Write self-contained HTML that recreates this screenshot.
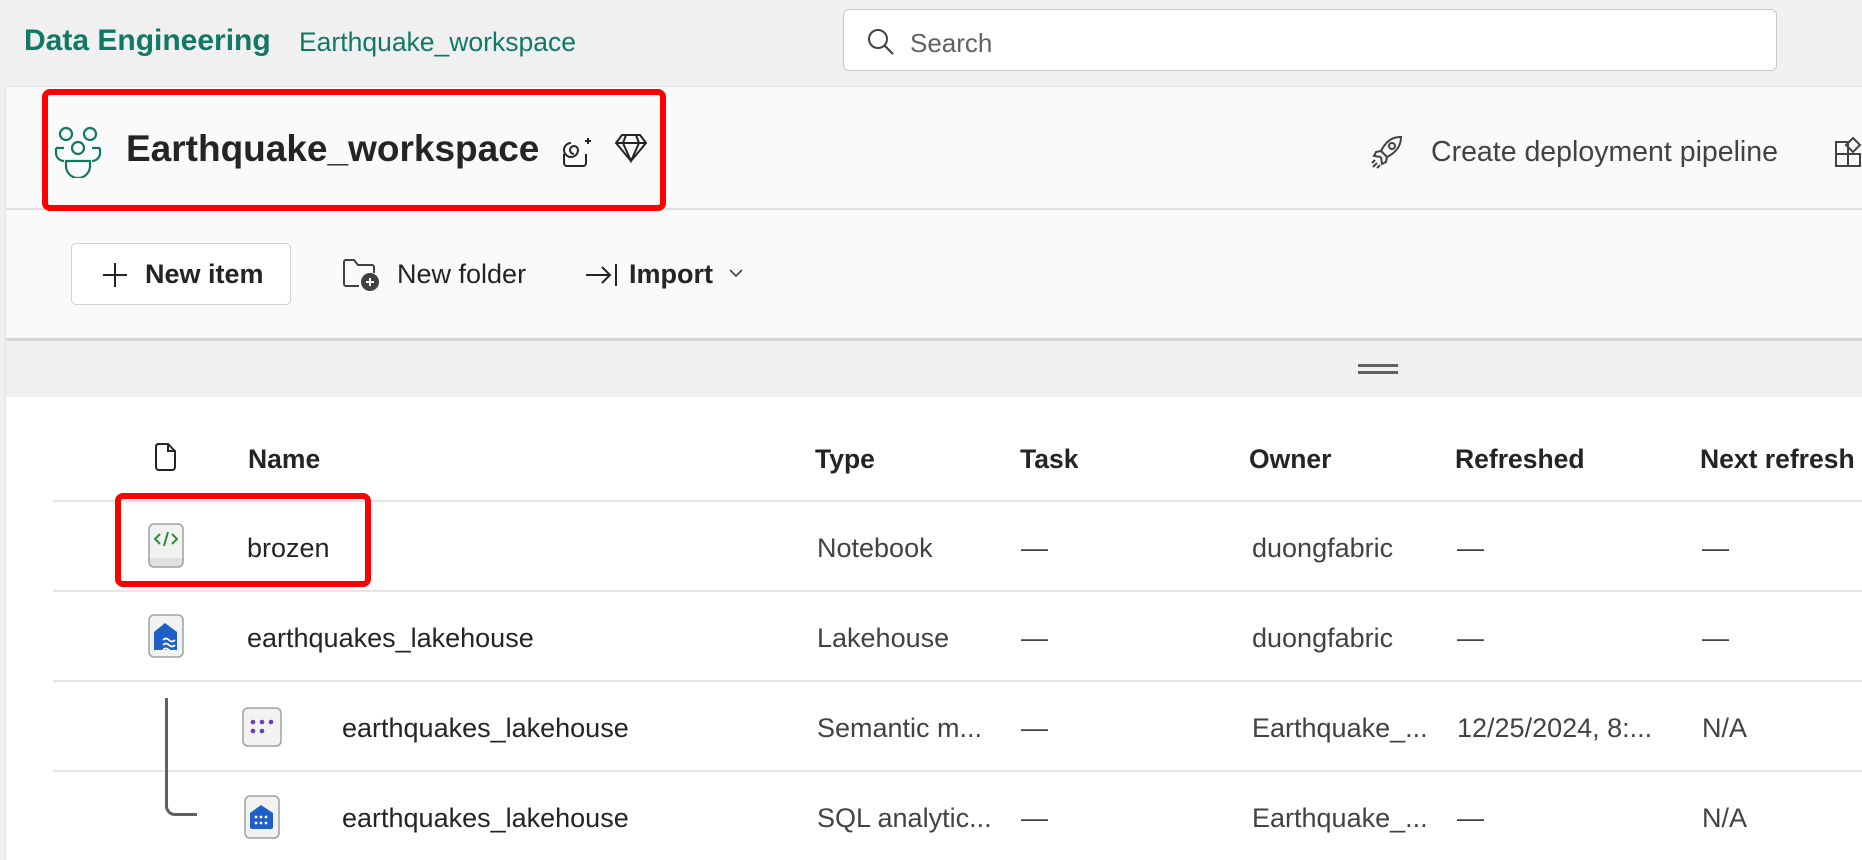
<!DOCTYPE html>
<html><head><meta charset="utf-8"><style>
*{margin:0;padding:0;box-sizing:border-box}
body{width:1862px;height:860px;overflow:hidden;background:#f0f0f0;font-family:"Segoe UI","Liberation Sans",sans-serif;position:relative;color:#242424}
.a{position:absolute;white-space:nowrap}
.panel{position:absolute;left:6px;top:87px;right:0;bottom:0;background:#fafafa;box-shadow:0 0 2px rgba(0,0,0,.15)}
.line{position:absolute;left:53px;right:0;height:2px;background:#e6e6e6}
.h{font-size:26.5px;font-weight:600;color:#242424;top:444px}
.c{font-size:27px;color:#424242}
</style></head><body>
<div class="a" style="left:24px;top:24px;font-size:30px;font-weight:600;color:#117865">Data Engineering</div>
<div class="a" style="left:299px;top:27px;font-size:26.5px;color:#117865">Earthquake_workspace</div>
<div class="a" style="left:843px;top:9px;width:934px;height:62px;background:#fff;border:1px solid #c8c8c8;border-radius:6px"></div>
<svg class="a" style="left:866px;top:27px" width="30" height="30" viewBox="0 0 30 30"><circle cx="12" cy="12" r="9" fill="none" stroke="#424242" stroke-width="2"/><line x1="18.5" y1="18.5" x2="27" y2="27" stroke="#424242" stroke-width="2.2"/></svg>
<div class="a" style="left:910px;top:28px;font-size:26px;color:#616161">Search</div>
<div class="panel"></div>
<div class="a" style="left:6px;top:208px;right:0;height:2px;background:#e0e0e0"></div>
<div class="a" style="left:6px;top:338px;right:0;height:3px;background:#d6d6d6"></div>
<div class="a" style="left:6px;top:341px;right:0;height:56px;background:#f0f0f0"></div>
<div class="a" style="left:1358px;top:364px;width:40px;height:3px;background:#616161"></div>
<div class="a" style="left:1358px;top:371px;width:40px;height:3px;background:#616161"></div>
<div class="a" style="left:6px;top:397px;right:0;bottom:0;background:#fff"></div>
<!-- header -->
<div class="a" style="left:42px;top:89px;width:624px;height:122px;border:6px solid #f00;border-radius:8px"></div>
<svg class="a" style="left:53px;top:126px" width="50" height="52" viewBox="0 0 50 52" fill="none" stroke="#117865" stroke-width="2.2"><circle cx="13" cy="8" r="6"/><circle cx="37" cy="8" r="6"/><circle cx="25" cy="22" r="6"/><path d="M3 22h8M39 22h8M3 22v5a8 8 0 0 0 8 8M47 22v5a8 8 0 0 1-8 8M13 35h24v5a12 12 0 0 1-24 0z"/></svg>
<div class="a" style="left:126px;top:128px;font-size:37px;font-weight:600;color:#242424">Earthquake_workspace</div>
<svg class="a" style="left:560px;top:134px" width="34" height="34" viewBox="0 0 34 34" fill="none" stroke="#242424" stroke-width="2"><path d="M4 20v9a3 3 0 0 0 3 3h16a3 3 0 0 0 3-3v-9"/><path d="M14 20a4 4 0 1 1 4-4 7 7 0 1 1-7-7"/><path d="M28 4v6M25 7h6"/></svg>
<svg class="a" style="left:614px;top:133px" width="34" height="30" viewBox="0 0 34 30" fill="none" stroke="#242424" stroke-width="2"><path d="M8 2h18l6 8-15 18L2 10z M2 10h30M12 2l-3 8 8 18 8-18-3-8"/></svg>
<svg class="a" style="left:1370px;top:134px" width="34" height="36" viewBox="0 0 34 36" fill="none" stroke="#424242" stroke-width="2"><path d="M30 3c-9 0-15 6-19 14l6 6c8-4 14-10 14-20z"/><circle cx="22" cy="12" r="3"/><path d="M11 17l-5 1-2 4 7 1M17 23l-1 5-4 2-1-7M3 33l4-4M7 34l3-3M2 29l3-3"/></svg>
<div class="a" style="left:1431px;top:136px;font-size:28.5px;color:#424242">Create deployment pipeline</div>
<svg class="a" style="left:1834px;top:136px" width="30" height="32" viewBox="0 0 30 32" fill="none" stroke="#424242" stroke-width="2"><path d="M2 6h12v24H2zM2 18h24v12H14"/><path d="M19 2l7 7-7 7-7-7z"/></svg>
<!-- toolbar -->
<div class="a" style="left:71px;top:243px;width:220px;height:62px;background:#fff;border:1px solid #d1d1d1;border-radius:5px"></div>
<svg class="a" style="left:101px;top:261px" width="28" height="28" viewBox="0 0 28 28" stroke="#242424" stroke-width="2"><path d="M14 2v24M2 14h24"/></svg>
<div class="a" style="left:145px;top:259px;font-size:27px;font-weight:600">New item</div>
<svg class="a" style="left:342px;top:258px" width="38" height="34" viewBox="0 0 38 34" fill="none" stroke="#424242" stroke-width="2"><path d="M17 28H4a2 2 0 0 1-2-2V4a2 2 0 0 1 2-2h8l4 5h14a2 2 0 0 1 2 2v6"/><circle cx="28" cy="24" r="8" fill="#424242"/><path d="M28 20v8M24 24h8" stroke="#fff"/></svg>
<div class="a" style="left:397px;top:259px;font-size:27px;color:#242424">New folder</div>
<svg class="a" style="left:584px;top:261px" width="34" height="28" viewBox="0 0 34 28" fill="none" stroke="#242424" stroke-width="2"><path d="M2 14h24M18 6l8 8-8 8M32 3v22"/></svg>
<div class="a" style="left:629px;top:259px;font-size:27px;font-weight:600">Import</div>
<svg class="a" style="left:728px;top:268px" width="16" height="10" viewBox="0 0 16 10" fill="none" stroke="#424242" stroke-width="1.6"><path d="M2 2l6 6 6-6"/></svg>
<!-- table header -->
<svg class="a" style="left:155px;top:443px" width="22" height="28" viewBox="0 0 22 28" fill="none" stroke="#242424" stroke-width="2"><path d="M3 1h10l7 7v16a3 3 0 0 1-3 3H4a3 3 0 0 1-3-3V4a3 3 0 0 1 2-3zM13 1v7h7"/></svg>
<div class="a h" style="left:248px">Name</div>
<div class="a h" style="left:815px">Type</div>
<div class="a h" style="left:1020px">Task</div>
<div class="a h" style="left:1249px">Owner</div>
<div class="a h" style="left:1455px">Refreshed</div>
<div class="a h" style="left:1700px">Next refresh</div>
<div class="line" style="top:500px"></div>
<div class="line" style="top:590px"></div>
<div class="line" style="top:680px"></div>
<div class="line" style="top:770px"></div>
<!-- rows -->
<svg class="a" style="left:148px;top:523px" width="36" height="46" viewBox="0 0 36 46"><rect x="1" y="1" width="34" height="40" rx="5" fill="#f2f2f2" stroke="#a0a0a0" stroke-width="1.5"/><path d="M1 35v4a5 5 0 0 0 5 5h24a5 5 0 0 0 5-5v-4" fill="#e0e0e0" stroke="#a0a0a0" stroke-width="1.5"/><path d="M12 11l-5 5 5 5M24 11l5 5-5 5M20 9l-4 14" fill="none" stroke="#2e8b37" stroke-width="2"/></svg>
<div class="a" style="left:115px;top:493px;width:256px;height:94px;border:6px solid #f00;border-radius:8px"></div>
<div class="a c" style="left:247px;top:533px;color:#242424">brozen</div>
<div class="a c" style="left:817px;top:533px">Notebook</div>
<div class="a c" style="left:1021px;top:533px">—</div>
<div class="a c" style="left:1252px;top:533px">duongfabric</div>
<div class="a c" style="left:1457px;top:533px">—</div>
<div class="a c" style="left:1702px;top:533px">—</div>

<svg class="a" style="left:148px;top:614px" width="36" height="44" viewBox="0 0 36 44"><rect x="1" y="1" width="34" height="42" rx="5" fill="#f2f2f2" stroke="#a0a0a0" stroke-width="1.5"/><path d="M6 36V18l11-9 12 9v18z" fill="#1f5fc8"/><path d="M15 26q3-3 6 0t6 0M15 31q3-3 6 0t6 0M15 36q3-3 6 0t6 0" fill="none" stroke="#fff" stroke-width="1.8"/></svg>
<div class="a c" style="left:247px;top:623px;color:#242424">earthquakes_lakehouse</div>
<div class="a c" style="left:817px;top:623px">Lakehouse</div>
<div class="a c" style="left:1021px;top:623px">—</div>
<div class="a c" style="left:1252px;top:623px">duongfabric</div>
<div class="a c" style="left:1457px;top:623px">—</div>
<div class="a c" style="left:1702px;top:623px">—</div>

<div class="a" style="left:165px;top:698px;width:3px;height:110px;background:#616161"></div>
<div class="a" style="left:165px;top:802px;width:32px;height:14px;border-left:3px solid #616161;border-bottom:3px solid #616161;border-bottom-left-radius:10px"></div>

<svg class="a" style="left:242px;top:707px" width="40" height="40" viewBox="0 0 40 40"><rect x="1" y="1" width="38" height="38" rx="5" fill="#f2f2f2" stroke="#a0a0a0" stroke-width="1.5"/><g fill="#6b3fb0"><circle cx="11" cy="15" r="2.3"/><circle cx="20" cy="15" r="2.3"/><circle cx="29" cy="15" r="2.3"/><circle cx="11" cy="24" r="2.3"/><circle cx="20" cy="24" r="2.3"/></g></svg>
<div class="a c" style="left:342px;top:713px;color:#242424">earthquakes_lakehouse</div>
<div class="a c" style="left:817px;top:713px">Semantic m...</div>
<div class="a c" style="left:1021px;top:713px">—</div>
<div class="a c" style="left:1252px;top:713px">Earthquake_...</div>
<div class="a c" style="left:1457px;top:713px">12/25/2024, 8:...</div>
<div class="a c" style="left:1702px;top:713px">N/A</div>

<svg class="a" style="left:244px;top:795px" width="36" height="44" viewBox="0 0 36 44"><rect x="1" y="1" width="34" height="42" rx="5" fill="#f2f2f2" stroke="#a0a0a0" stroke-width="1.5"/><path d="M6 32V18l11-8 12 8v14a2 2 0 0 1-2 2H8a2 2 0 0 1-2-2z" fill="#1f5fc8"/><g fill="#fff"><circle cx="12" cy="22" r="1.4"/><circle cx="17" cy="22" r="1.4"/><circle cx="22" cy="22" r="1.4"/><circle cx="12" cy="28" r="1.4"/><circle cx="17" cy="28" r="1.4"/><circle cx="22" cy="28" r="1.4"/></g></svg>
<div class="a c" style="left:342px;top:803px;color:#242424">earthquakes_lakehouse</div>
<div class="a c" style="left:817px;top:803px">SQL analytic...</div>
<div class="a c" style="left:1021px;top:803px">—</div>
<div class="a c" style="left:1252px;top:803px">Earthquake_...</div>
<div class="a c" style="left:1457px;top:803px">—</div>
<div class="a c" style="left:1702px;top:803px">N/A</div>
</body></html>
